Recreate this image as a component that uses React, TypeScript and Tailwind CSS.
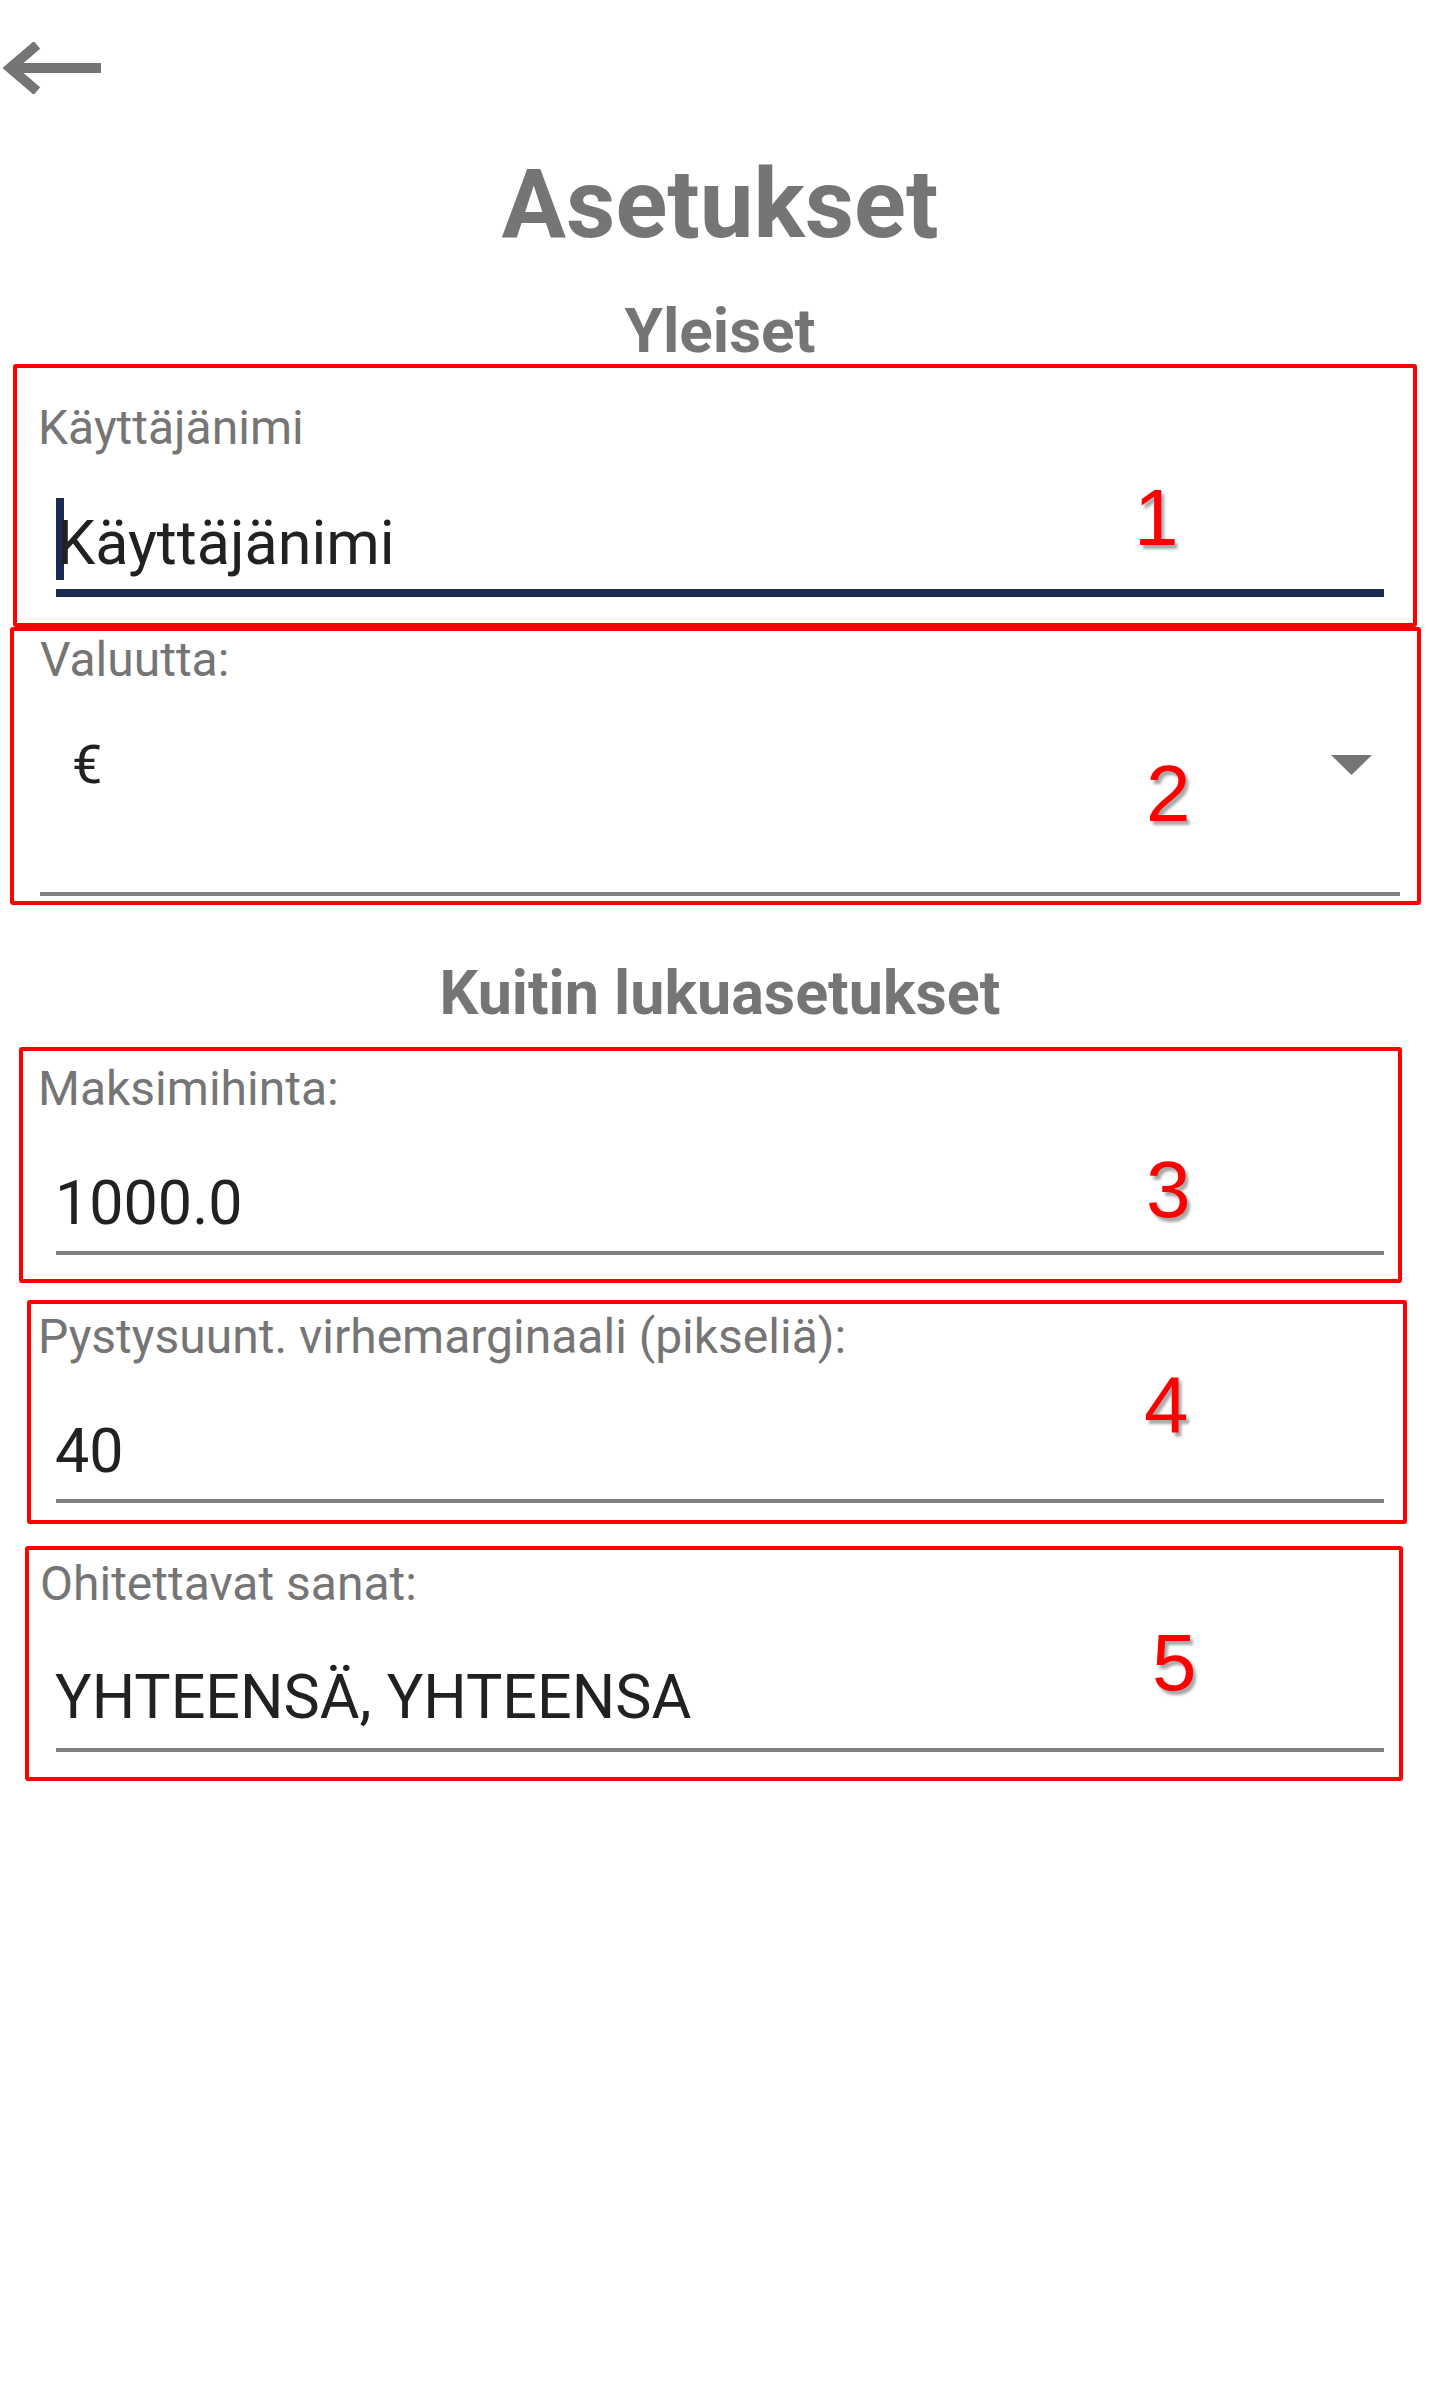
import React from "react";

const Num = ({ n, top, left }: { n: string; top: number; left: number }) => (
  <span
    className="absolute font-['Liberation_Sans',Arial,sans-serif] text-[80px] leading-none text-[#ff0000] [text-shadow:3px_4px_3px_rgba(0,0,0,0.35)]"
    style={{ top, left }}
  >
    {n}
  </span>
);

export default function App() {
  return (
    <div className="w-[1440px] h-[2392px] bg-white font-[Roboto,sans-serif] flex flex-col">
      {/* header */}
      <div className="h-[156px] pt-[42px] pl-[3px]">
        <svg width="98" height="52" viewBox="0 0 98 52" fill="none">
          <path d="M98 26 H8" stroke="#757575" strokeWidth="10" />
          <path d="M34 3 L7 26 L34 49" stroke="#757575" strokeWidth="10" strokeLinejoin="miter" />
        </svg>
      </div>
      <h1 className="text-center text-[96px] leading-none font-bold text-[#757575]">Asetukset</h1>
      <h2 className="mt-[48px] text-center text-[62px] leading-none font-bold text-[#757575]">Yleiset</h2>

      {/* Box 1 */}
      <div className="relative mt-[2px] ml-[13px] w-[1404px] h-[263px] border-[4px] border-[#ff0000] rounded-[3px] flex flex-col">
        <div className="mt-[36px] ml-[21px] text-[48px] leading-none text-[#757575]">Käyttäjänimi</div>
        <div className="mt-[46px] ml-[39px] h-[82px] flex items-stretch">
          <div className="w-[8px] bg-[#1b2a52]" />
          <span className="self-end mb-[6.4px] -ml-[7px] text-[61px] leading-none text-[#212121]">Käyttäjänimi</span>
        </div>
        <div className="mt-[9px] ml-[39px] w-[1328px] h-[8px] bg-[#1b2a52]" />
        <Num n="1" top={110} left={1117} />
      </div>

      {/* Box 2 */}
      <div className="relative ml-[10px] w-[1411px] h-[278px] border-[4px] border-[#ff0000] rounded-[3px] flex flex-col">
        <div className="mt-[4.6px] ml-[26px] text-[48px] leading-none text-[#757575]">Valuutta:</div>
        <div className="mt-[54px] flex items-start justify-between">
          <span className="ml-[58px] text-[54px] leading-none text-[#212121]">€</span>
          <svg className="mt-[17.5px] mr-[45px]" width="41" height="20" viewBox="0 0 41 20">
            <polygon points="0,0 41,0 20.5,20" fill="#757575" />
          </svg>
        </div>
        <div className="mt-[100.5px] ml-[26px] w-[1360px] h-[4px] bg-[#808080]" />
        <Num n="2" top={123} left={1132} />
      </div>

      <h2 className="mt-[57.6px] text-center text-[61px] leading-none font-bold text-[#757575]">Kuitin lukuasetukset</h2>

      {/* Box 3 */}
      <div className="relative mt-[23.4px] ml-[19px] w-[1383px] h-[236px] border-[4px] border-[#ff0000] rounded-[3px] flex flex-col">
        <div className="mt-[13.6px] ml-[15px] text-[48px] leading-none text-[#757575]">Maksimihinta:</div>
        <div className="mt-[60px] ml-[32px] text-[61px] leading-none text-[#212121]">1000.0</div>
        <div className="mt-[17.4px] ml-[33px] w-[1328px] h-[4px] bg-[#808080]" />
        <Num n="3" top={99} left={1123} />
      </div>

      {/* Box 4 */}
      <div className="relative mt-[17px] ml-[27px] w-[1380px] h-[224px] border-[4px] border-[#ff0000] rounded-[3px] flex flex-col">
        <div className="mt-[8.6px] ml-[7px] text-[48px] leading-none text-[#757575]">Pystysuunt. virhemarginaali (pikseliä):</div>
        <div className="mt-[60px] ml-[24px] text-[61px] leading-none text-[#212121]">40</div>
        <div className="mt-[17.4px] ml-[25px] w-[1328px] h-[4px] bg-[#808080]" />
        <Num n="4" top={61} left={1113} />
      </div>

      {/* Box 5 */}
      <div className="relative mt-[22px] ml-[25px] w-[1378px] h-[235px] border-[4px] border-[#ff0000] rounded-[3px] flex flex-col">
        <div className="mt-[9.6px] ml-[11px] text-[48px] leading-none text-[#757575]">Ohitettavat sanat:</div>
        <div className="mt-[59px] ml-[26px] text-[61px] leading-none text-[#212121]">YHTEENSÄ, YHTEENSA</div>
        <div className="mt-[20.4px] ml-[27px] w-[1328px] h-[4px] bg-[#808080]" />
        <Num n="5" top={73} left={1123} />
      </div>
    </div>
  );
}
